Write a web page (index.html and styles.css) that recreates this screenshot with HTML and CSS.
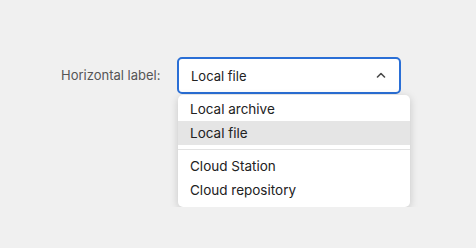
FILE: index.html
```html
<!DOCTYPE html>
<html lang="en">
<head>
    <meta charset="UTF-8">
    <meta name="viewport" content="width=device-width, initial-scale=1.0">
    <title>Select</title>
    <link rel="stylesheet" href="styles.css">
</head>
<body>

    <!-- Form row with open select -->
    <div class="form-row">
        <label class="form-label" for="source">Horizontal label:</label>
        <div class="select-wrap">
            <div class="select-box" id="source">
                <span class="select-value">Local file</span>
                <svg class="chevron" width="10" height="6" viewBox="0 0 10 6">
                    <path d="M1.5 5 L5 1.5 L8.5 5" fill="none" stroke="#4a4a4a" stroke-width="1.6" stroke-linecap="round" stroke-linejoin="round"/>
                </svg>
            </div>

            <ul class="select-menu">
                <li class="menu-item">Local archive</li>
                <li class="menu-item selected">Local file</li>
                <li class="menu-divider"></li>
                <li class="menu-item">Cloud Station</li>
                <li class="menu-item">Cloud repository</li>
            </ul>
        </div>
    </div>

</body>
</html>
```

FILE: styles.css
```css
body {
    margin: 0;
    background-color: #f0f0f0;
    font-family: Inter, "Noto Sans", Arial, sans-serif;
    font-size: 13px;
}

.form-row {
    display: flex;
    align-items: flex-start;
    padding: 57px 0 0 61px;
}

.form-label {
    color: #555;
    width: 116px;
    line-height: 36px;
}

.select-wrap {
    display: flex;
    flex-direction: column;
}

.select-box {
    box-sizing: border-box;
    width: 224px;
    height: 37px;
    display: flex;
    align-items: center;
    justify-content: space-between;
    padding: 0 13px 0 12px;
    background-color: white;
    border: 2px solid #2a6fd6;
    border-radius: 5px;
    color: #222;
}

.chevron {
    display: block;
    margin-top: -1px;
}

.select-menu {
    width: 232px;
    margin: 1px 0 0 1px;
    padding: 2px 0 5px;
    list-style: none;
    background-color: white;
    border-radius: 5px;
    box-shadow: 0 2px 8px rgba(0, 0, 0, 0.18);
    color: #222;
    font-size: 13.5px;
}

.menu-item {
    height: 24px;
    line-height: 24px;
    padding: 0 12px;
}

.menu-item.selected {
    background-color: #e5e5e5;
}

.menu-divider {
    height: 1px;
    margin: 4px 0;
    background-color: #e2e2e2;
}
```
